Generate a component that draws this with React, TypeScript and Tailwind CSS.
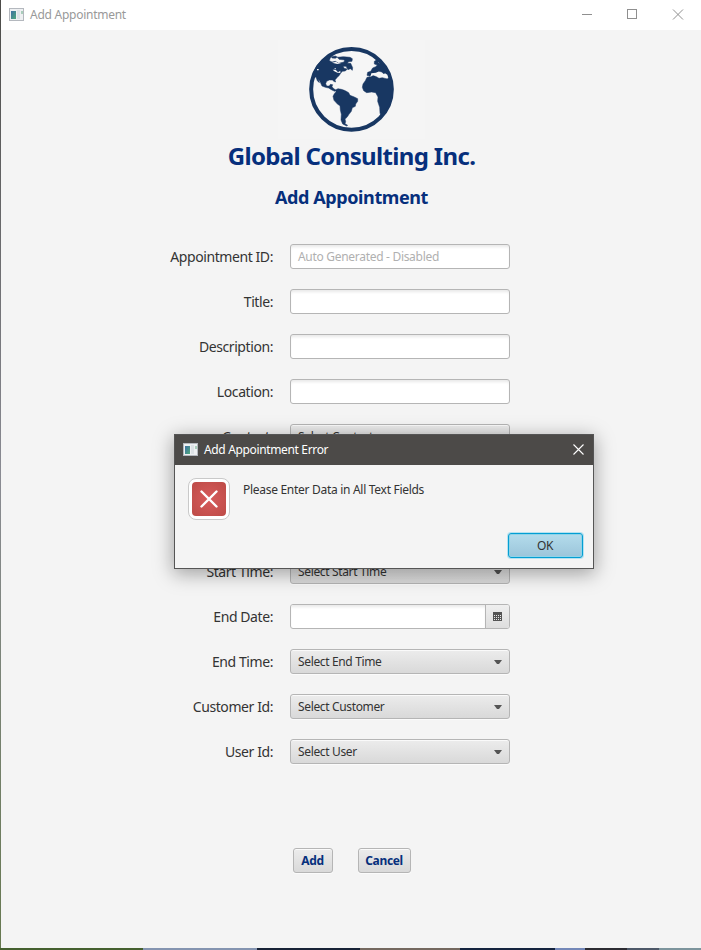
import type { ReactNode } from "react";

const controlBorder = "rounded-[3px] border border-[#b5b5b5]";
const buttonFill =
  "bg-linear-to-b from-[#ececec] to-[#d9d9d9] shadow-[inset_0_1px_0_#fafafa,0_1px_0_#fbfbfb]";

function AppIcon() {
  return (
    <svg width="16" height="14" viewBox="0 0 16 14" shapeRendering="crispEdges">
      <defs>
        <linearGradient id="pane" x1="0" y1="0" x2="1" y2="1">
          <stop offset="0" stopColor="#3d6fa3" />
          <stop offset="1" stopColor="#4fa97c" />
        </linearGradient>
      </defs>
      <rect x="0" y="0" width="15" height="13" fill="#b4b8be" />
      <rect x="1" y="1" width="13" height="11" fill="#eef0f2" />
      <rect x="2" y="3" width="5" height="8" fill="url(#pane)" />
      <rect x="8" y="2" width="3" height="9" fill="#dde2e6" />
      <rect x="12" y="3" width="2" height="3" fill="#a9cdbb" />
    </svg>
  );
}

function Globe() {
  return (
    <svg width="160" height="104" viewBox="0 0 480 312" className="shrink-0">
      <rect x="24" y="12" width="442" height="297" fill="#f5f5f5" />
      <circle cx="244.5" cy="160" r="121" fill="#f6f6f6" stroke="#183762" strokeWidth="12" />
      <g fill="#183762" stroke="#183762" strokeWidth="1.5">
        <path d="M176 62L184 60L180 68L178 74L186 78L196 76L206 82L222 78L224 72L207 70L202 64L220 62L240 64L247 68L246 76L236 77L232 82L242 82L248 95L247 103L241 98L234 101L228 91L220 91L222 97L232 99L226 105L217 106L212 112L207 119L202 124L195 132L197 138L191 136L188 132L178 132L170 136L167 143L170 150L178 150L181 145L188 146L186 152L190 157L198 163L194 166L184 161L176 156L166 154L156 150L151 139L145 128L148 140L142 134L138 124L130 121L132 106L143 86L161 69Z" />
        <path d="M184 62L196 60L202 63L196 67L186 66Z" />
        <path d="M196 162L204 158L214 160L223 163L229 166L236 170L240 178L253 183L263 188L263 196L257 204L256 211L247 215L244 226L237 235L231 244L225 249L227 257L225 263L233 268L230 270L218 264L213 252L214 235L211 222L210 209L203 205L192 193L189 181L193 173L198 167Z" />
        <path d="M313 76L321 71L329 75L324 80L334 83L341 88L353 104L361 122L367 145L366 173L359 202L348 220L334 238L330 232L329 214L323 196L324 183L317 170L305 168L290 170L281 164L277 154L279 144L286 134L291 124L303 122L309 118L319 122L327 127L337 125L349 128L356 128L351 118L343 115L335 108L327 106L319 111L305 113L300 121L291 118L293 109L302 106L308 96L317 92L322 87L313 84Z" />
      </g>
      <path d="M304 112L318 110L325 107L332 110L341 115L345 112L352 116L355 126L342 123L331 123L323 119L309 118L302 121Z" fill="#f6f6f6" />
      <path d="M186 80L198 77L204 81L214 81L202 84ZM188 101L197 101L204 109L211 104L211 111L202 110L193 106Z" fill="#f6f6f6" />
      <path d="M141 99h5v4h-5zM194 96h3v3h-3z" fill="#f6f6f6" />
    </svg>
  );
}

function Row({ label, children }: { label: string; children: ReactNode }) {
  return (
    <div className="flex h-[25px] items-center">
      <div className="mr-[17px] w-[273px] text-right text-[14px] leading-[25px] tracking-[-0.42px] whitespace-nowrap text-[#333]">
        {label}
      </div>
      {children}
    </div>
  );
}

function TextBox({ placeholder }: { placeholder?: string }) {
  return (
    <div
      className={`${controlBorder} h-[25px] w-[220px] bg-white pl-[7px] text-[12px] leading-[23px] tracking-[-0.3px] text-[#b0b0b0] shadow-[inset_0_3px_3px_-1px_#e9e9e9]`}
    >
      {placeholder}
    </div>
  );
}

function ComboBox({ text }: { text: string }) {
  return (
    <div
      className={`${controlBorder} ${buttonFill} flex h-[25px] w-[220px] items-center justify-between pr-[7px] pl-[7px] text-[12px] leading-[23px] tracking-[-0.35px] text-[#333]`}
    >
      <span>{text}</span>
      <svg width="8" height="4" viewBox="0 0 8 4">
        <path d="M0 0H8L5 4H3Z" fill="#555" />
      </svg>
    </div>
  );
}

function DateBox() {
  return (
    <div className={`${controlBorder} flex h-[25px] w-[220px] overflow-hidden bg-white`}>
      <div className="flex-1 shadow-[inset_0_3px_3px_-1px_#e9e9e9]" />
      <div className="flex w-[24px] items-center justify-center border-l border-[#b5b5b5] bg-linear-to-b from-[#efefef] to-[#dedede]">
        <svg width="9" height="9" viewBox="0 0 9 9" shapeRendering="crispEdges">
          <rect width="9" height="9" fill="#555" />
          <path d="M1 3h1v1H1zM3 3h1v1H3zM5 3h1v1H5zM7 3h1v1H7zM1 5h1v1H1zM3 5h1v1H3zM5 5h1v1H5zM7 5h1v1H7zM1 7h1v1H1zM3 7h1v1H3zM5 7h1v1H5zM7 7h1v1H7z" fill="#e8e8e8" />
        </svg>
      </div>
    </div>
  );
}

function ErrorDialog() {
  return (
    <div className="absolute top-[434px] left-[174px] flex h-[135px] w-[420px] flex-col border border-[#555] bg-[#f4f4f4] shadow-[0_4px_18px_1px_rgba(0,0,0,0.34)]">
      <div className="flex h-[30px] items-center bg-[#4c4a48] pr-[9px] pl-2">
        <AppIcon />
        <span className="ml-[5px] flex-1 text-[12px] leading-[30px] tracking-[-0.35px] text-white">
          Add Appointment Error
        </span>
        <svg width="11" height="11" viewBox="0 0 11 11" className="mb-[2px]">
          <path d="M.5 .5L10.5 10.5M10.5 .5L.5 10.5" stroke="#fff" strokeWidth="1.1" />
        </svg>
      </div>
      <div className="flex pt-[13px] pl-[13px]">
        <div className="flex size-[42px] items-center justify-center rounded-[8px] border border-[#c9c9c9] bg-white">
          <div className="flex size-[34px] items-center justify-center rounded-[4px] bg-radial from-[#d75b5b] to-[#bd4b47]">
            <svg width="18" height="18" viewBox="0 0 18 18">
              <path d="M1.5 1.5L16.5 16.5M16.5 1.5L1.5 16.5" stroke="#fff" strokeWidth="2.4" strokeLinecap="round" />
            </svg>
          </div>
        </div>
        <div className="ml-[13px] pt-[3px] text-[12px] leading-[18px] tracking-[-0.29px] text-[#333]">
          Please Enter Data in All Text Fields
        </div>
      </div>
      <div className="mt-[13px] flex justify-end pr-[10px]">
        <div className="h-[25px] w-[75px] rounded-[3px] border border-[#039ed3] bg-linear-to-b from-[#b4dcec] to-[#9bc5da] pr-px text-center text-[12px] leading-[23px] tracking-[-0.4px] text-[#333] shadow-[inset_0_0_0_1px_#8fd3e8,0_0_0_1px_#b5e2f0]">
          OK
        </div>
      </div>
    </div>
  );
}

export default function App() {
  return (
    <div className="relative flex h-[950px] w-[701px] flex-col overflow-hidden bg-[#f4f4f4] font-['Noto_Sans','Open_Sans',sans-serif]">
      <div className="flex min-h-0 flex-1">
        <div className="w-px shrink-0 bg-linear-to-b from-[#4b4b48] via-[#8a8b93] to-[#66784f]" />
        <div className="flex min-w-0 flex-1 flex-col">
          <div className="flex h-[30px] shrink-0 items-center bg-white pr-[17px] pl-2">
            <AppIcon />
            <span className="ml-[5px] flex-1 text-[12px] leading-[30px] tracking-[-0.26px] text-[#999]">Add Appointment</span>
            <svg width="102" height="11" viewBox="0 0 102 11" className="mb-[2px]">
              <path d="M0 5.5H10M45.5 .5H54.5V9.5H45.5Z" fill="none" stroke="#8f8f8f" shapeRendering="crispEdges" />
              <path d="M91 .5L101 10.5M101 .5L91 10.5" stroke="#8f8f8f" />
            </svg>
          </div>
          <div className="mt-[6px] ml-[269px] flex h-[104px] shrink-0">
            <Globe />
          </div>
          <h1 className="w-[701px] shrink-0 text-center text-[24px] leading-[32px] font-bold tracking-[-0.65px] text-[#062f7c]">
            Global Consulting Inc.
          </h1>
          <h2 className="mt-[12px] w-[701px] shrink-0 text-center text-[18px] leading-[26px] font-bold tracking-[-0.4px] text-[#062f7c]">
            Add Appointment
          </h2>
          <div className="mt-[34px] -ml-px flex flex-col gap-5">
            <Row label="Appointment ID:"><TextBox placeholder="Auto Generated - Disabled" /></Row>
            <Row label="Title:"><TextBox /></Row>
            <Row label="Description:"><TextBox /></Row>
            <Row label="Location:"><TextBox /></Row>
            <Row label="Contact:"><ComboBox text="Select Contact" /></Row>
            <div className="h-[70px]" />
            <Row label="Start Time:"><ComboBox text="Select Start Time" /></Row>
            <Row label="End Date:"><DateBox /></Row>
            <Row label="End Time:"><ComboBox text="Select End Time" /></Row>
            <Row label="Customer Id:"><ComboBox text="Select Customer" /></Row>
            <Row label="User Id:"><ComboBox text="Select User" /></Row>
          </div>
          <div className="mt-[84px] ml-[292px] flex gap-[25px] text-center text-[12px] leading-[23px] font-bold tracking-[-0.35px] text-[#062f7c]">
            <div className={`${controlBorder} ${buttonFill} h-[25px] w-[40px] pr-px`}>Add</div>
            <div className={`${controlBorder} ${buttonFill} h-[25px] w-[53px] pr-px`}>Cancel</div>
          </div>
        </div>
      </div>
      <div className="flex h-[2px] shrink-0">
        <div className="w-[143px] bg-[#45602f]" />
        <div className="w-[114px] bg-[#8494b0]" />
        <div className="w-[103px] bg-[#172236]" />
        <div className="w-[100px] bg-[#74685f]" />
        <div className="w-[95px] bg-[#14233e]" />
        <div className="w-[30px] bg-[#7488b8]" />
        <div className="w-[42px] bg-[#2c2c32]" />
        <div className="w-[32px] bg-[#4d5868]" />
        <div className="flex-1 bg-[#7c949c]" />
      </div>
      <ErrorDialog />
    </div>
  );
}
